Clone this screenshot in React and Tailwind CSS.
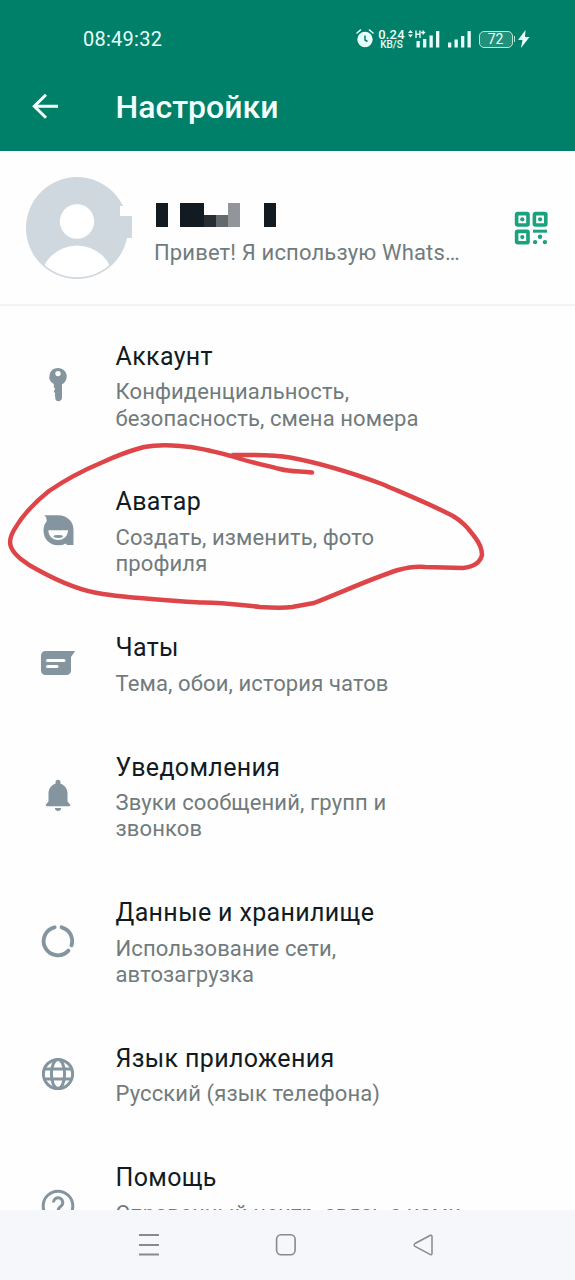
import React from "react";

const iconClass = "block h-9 w-9 overflow-visible text-[#84959f]";

function KeyIcon() {
  return (
    <svg viewBox="0 0 36 36" className={iconClass} fill="currentColor">
      <path fillRule="evenodd" d="M18 1a8.600 8.600 0 0 0-4.200 16.100V20l1.300 2-1.400 2.200 1.500 2.300-.4 2 .5 1.700v1.400c0 1.300 1.200 2.600 2.900 2.600 2 0 3.800-1.300 3.800-3.200V17.300A8.600 8.600 0 0 0 18 1Zm0 2.900a2.700 2.700 0 1 1 0 5.400 2.700 2.700 0 0 1 0-5.400Z" />
    </svg>
  );
}

function AvatarIcon() {
  return (
    <svg viewBox="0 0 36 36" className={iconClass} fill="currentColor">
      <path fillRule="evenodd" d="M4.300 2.200H18C27 2.200 33.500 8.400 33.500 17V32h-5.200c-1.200 0-2-.7-2.500-1.600A15 15 0 0 1 18 32.300C9.600 32.300 3.500 26 3.500 17.500c0-3.600 1-6.500 3.200-9.200C6.700 5.500 6.100 3.700 4.300 2.200ZM8.300 17.300c0 5.500 4.100 9.700 9.900 9.700s9.800-4.200 9.800-9.700Z" />
      <ellipse cx="18.200" cy="23.500" rx="4.700" ry="1.400" />
    </svg>
  );
}

function ChatIcon() {
  return (
    <svg viewBox="0 0 36 36" className={iconClass} fill="currentColor">
      <path d="M5.500 6H34.200c.6 0 .7.600.4 1.100L31 12v13.500c0 2.500-2 4.500-4.500 4.500h-21A4.500 4.500 0 0 1 1 25.500v-15C1 8 3 6 5.500 6Z" />
      <path d="M7.500 15.500H24M7.500 21.500H17" stroke="#fff" strokeWidth="3" strokeLinecap="round" />
    </svg>
  );
}

function BellIcon() {
  return (
    <svg viewBox="0 0 36 36" className={iconClass} fill="currentColor">
      <path d="M18 1.800c-1.500 0-2.500 1-2.500 2.500v1.500C11 7.100 8.500 11 8.500 15.500v8l-2.400 2.700c-.7 1-.2 2 1 2h21.800c1.200 0 1.700-1 1-2l-2.400-2.700v-8c0-4.500-2.500-8.400-7-9.700V4.300c0-1.500-1-2.500-2.500-2.500Z" />
      <path d="M14.800 30h6.400c-.2 1.800-1.500 3-3.200 3s-3-1.200-3.200-3Z" />
    </svg>
  );
}

function DataIcon() {
  return (
    <svg viewBox="0 0 36 36" className={iconClass} fill="none" stroke="currentColor" strokeWidth="3.900" strokeLinecap="round">
      <path d="M21.600 4.300A14.200 14.200 0 0 1 31.500 22.300" />
      <path d="M14.600 4.300A14.200 14.200 0 1 0 28.400 27.600" />
    </svg>
  );
}

function GlobeIcon() {
  return (
    <svg viewBox="0 0 36 36" className={iconClass} fill="none" stroke="currentColor" strokeWidth="3">
      <circle cx="18" cy="18" r="14.600" />
      <ellipse cx="18" cy="18" rx="6.600" ry="14.600" />
      <path d="M4.500 13h27M4.500 23h27" />
    </svg>
  );
}

function HelpIcon() {
  return (
    <svg viewBox="0 0 36 36" className={iconClass} fill="none" stroke="currentColor" strokeWidth="3">
      <circle cx="18" cy="18" r="14.800" />
      <path d="M13.400 14.500a4.700 4.700 0 1 1 7.900 3.400c-1.900 1.700-3.200 2.500-3.200 4.900M18 25v3" />
    </svg>
  );
}

const items = [
  { title: "Аккаунт", lines: ["Конфиденциальность,", "безопасность, смена номера"], Icon: KeyIcon },
  { title: "Аватар", lines: ["Создать, изменить, фото", "профиля"], Icon: AvatarIcon },
  { title: "Чаты", lines: ["Тема, обои, история чатов"], Icon: ChatIcon },
  { title: "Уведомления", lines: ["Звуки сообщений, групп и", "звонков"], Icon: BellIcon },
  { title: "Данные и хранилище", lines: ["Использование сети,", "автозагрузка"], Icon: DataIcon },
  { title: "Язык приложения", lines: ["Русский (язык телефона)"], Icon: GlobeIcon },
  { title: "Помощь", lines: ["Справочный центр, связь с нами"], Icon: HelpIcon, tall: true },
];

function SettingsRow({ title, lines, Icon, tall }) {
  return (
    <li className={tall ? "flex min-h-[145.7px] shrink-0 items-center" : "flex shrink-0 items-center"}>
      <div className="flex w-[115.5px] shrink-0 justify-center">
        <Icon />
      </div>
      <div className="self-start pt-[28.8px] pb-[25.8px] whitespace-nowrap">
        <h2 className="text-[25px] leading-[32px] tracking-[0.35px] text-[#111b21]">{title}</h2>
        <p className="mt-[6.5px] text-[22px] leading-[26.3px] tracking-[0.12px] text-[#717b7c]">
          {lines.map((line) => (
            <span key={line} className="block">{line}</span>
          ))}
        </p>
      </div>
    </li>
  );
}

function StatusBar() {
  return (
    <div className="flex h-[78px] items-center justify-between pr-[45px] pl-[83px] text-[#e9fffb]">
      <span className="text-[20px] leading-6 tracking-[0.25px]">08:49:32</span>
      <div className="flex items-center">
        <svg viewBox="0 0 18 20" className="h-5 w-[18px]" fill="none" stroke="currentColor">
          <circle cx="9" cy="10.500" r="7.700" fill="currentColor" stroke="none" />
          <path d="M1 4 4.500 1M17 4 13.500 1" strokeWidth="1.600" strokeLinecap="round" />
          <path d="M9 6.500V11l2.500 1.500" stroke="#008069" strokeWidth="1.500" />
        </svg>
        <div className="ml-[4px] flex w-[28px] flex-col items-center">
          <span className="text-[13px] leading-[11px] font-medium tracking-[0.2px]">0.24</span>
          <span className="text-[10px] leading-[9px] font-medium">KB/S</span>
        </div>
        <svg viewBox="0 0 32 20" className="ml-[2px] h-5 w-8" fill="currentColor">
          <path d="m0 4 2.500-3L5 4ZM0 5.500h5L2.500 8.500Z" />
          <path d="M8 1.500V9M12 1.500V9M8 5.200h4M13.200 3.500h4M15.200 1.500v4" stroke="currentColor" strokeWidth="1.400" />
          <path d="M8.500 12h3.300v6.500H8.500ZM15 10h3.300v8.500H15ZM21.500 6.500h3.300v12h-3.300ZM28 2h3.300v16.500H28Z" />
        </svg>
        <svg viewBox="0 0 23 20" className="ml-[8px] h-5 w-[23px]" fill="currentColor">
          <path d="M0 13.500h3.300v5H0ZM6.500 10.500h3.300v8H6.500ZM13 7h3.300v11.500H13ZM19.500 2h3.300v16.500h-3.300Z" />
        </svg>
        <div className="ml-2 flex h-[17px] w-[34px] items-center justify-center rounded-[5px] border-[1.500px] border-[#b5ead9] bg-[#23907a] text-[14px] leading-none">72</div>
        <div className="ml-px h-[6px] w-[1.500px] bg-[#b5ead9]" />
        <svg viewBox="0 0 12 20" className="ml-[3px] h-5 w-3" fill="currentColor">
          <path d="M7.500 1 0 11h4.500L3 19l8.500-11H7Z" />
        </svg>
      </div>
    </div>
  );
}

function ProfileAvatar() {
  return (
    <svg viewBox="0 0 108 104" className="h-[104px] w-[108px] shrink-0">
      <clipPath id="shoulders">
        <circle cx="52" cy="52" r="49.300" />
      </clipPath>
      <circle cx="52" cy="52" r="51" fill="#cfd8df" />
      <path d="M95 30h12v10H95Z" fill="#fefefe" />
      <path d="M95 40h12v22H95Z" fill="#cfd8df" />
      <circle cx="52" cy="45.500" r="17.200" fill="#fff" />
      <ellipse cx="52" cy="104" rx="36" ry="34.500" fill="#fff" clipPath="url(#shoulders)" />
    </svg>
  );
}

function RedactedName() {
  return (
    <svg viewBox="0 0 121 24" className="ml-[2px] h-6 w-[121px]" shapeRendering="crispEdges">
      <path d="M0 0h12v24H0ZM24 0h24v24H24ZM108 0h12v24h-12Z" fill="#111b21" />
      <path d="M48 12h12v12H48Z" fill="#262d33" />
      <path d="M60 12h12v12H60Z" fill="#64696c" />
      <path d="M72 0h12v24H72Z" fill="#92969a" />
    </svg>
  );
}

function QrIcon() {
  return (
    <svg viewBox="0 0 34 34" className="h-[34px] w-[34px]" fill="none" stroke="#1aa27f">
      <g strokeWidth="3.600">
        <rect x="2.600" y="2.600" width="11.400" height="11.400" rx="1" />
        <rect x="20.400" y="2.600" width="11.400" height="11.400" rx="1" />
        <rect x="2.600" y="20.400" width="11.400" height="11.400" rx="1" />
        <path d="M19 20.200h14" strokeWidth="3" />
      </g>
      <g fill="#1aa27f" stroke="none">
        <circle cx="8.300" cy="8.300" r="2.100" />
        <circle cx="26.100" cy="8.300" r="2.100" />
        <circle cx="8.300" cy="26.100" r="2.100" />
        <circle cx="26" cy="25.800" r="2.200" />
        <circle cx="21.100" cy="31.100" r="2.200" />
        <circle cx="30.900" cy="31.100" r="2.200" />
      </g>
    </svg>
  );
}

export default function App() {
  return (
    <div className="relative flex h-[1280px] w-[575px] flex-col overflow-hidden bg-[#fefefe] font-['Roboto',sans-serif]">
      <header className="h-[151px] shrink-0 bg-[#008069]">
        <StatusBar />
        <div className="flex h-[58px] items-center pl-8">
          <svg viewBox="0 0 27 26" className="h-[26px] w-[27px]" fill="none" stroke="#f4fffd" strokeWidth="3">
            <path d="M26 12.200H2.500M14 .8 2.300 12.200 14 23.800" />
          </svg>
          <h1 className="ml-[56.500px] text-[32px] leading-[40px] font-medium text-[#f4fffd]">Настройки</h1>
        </div>
      </header>

      <section className="flex h-[155px] shrink-0 items-center border-b-2 border-[#f1f3f4] pl-[25px]">
        <ProfileAvatar />
        <div className="ml-[21px] w-[320px] pt-[14px]">
          <RedactedName />
          <p className="mt-[12px] text-[22px] leading-[28px] tracking-[0.15px] whitespace-nowrap text-[#717b7c]">Привет! Я использую Whats…</p>
        </div>
        <div className="ml-[40px]">
          <QrIcon />
        </div>
      </section>

      <main className="min-h-0 flex-1 overflow-hidden pt-[6px]">
        <ul className="flex flex-col">
          {items.map((item) => (
            <SettingsRow key={item.title} {...item} />
          ))}
        </ul>
      </main>

      <nav className="flex h-[70px] shrink-0 items-center justify-between bg-[#f6f7fa] pr-[139px] pl-[136.5px]">
        <svg viewBox="0 0 24 24" className="h-6 w-6" fill="none" stroke="#888a8d" strokeWidth="1.800">
          <path d="M2 2h20M2 12h20M2 21.500h20" />
        </svg>
        <svg viewBox="0 0 24 24" className="h-6 w-6" fill="none" stroke="#888a8d" strokeWidth="1.600">
          <rect x="2.600" y="1.800" width="18.500" height="20" rx="4.500" />
        </svg>
        <svg viewBox="0 0 24 24" className="h-6 w-6" fill="none" stroke="#888a8d" strokeWidth="1.500" strokeLinejoin="round">
          <path d="M3 10.500 18 2.500c1.200-.6 2 0 2 1v17c0 1-.8 1.500-2 .9L3 13.300c-1.200-.8-1.200-2 0-2.800Z" />
        </svg>
      </nav>

      <svg viewBox="0 0 500 190" className="pointer-events-none absolute top-[430px] left-0 h-[190px] w-[500px]" fill="none" stroke="#de4548" strokeWidth="4.500" strokeLinecap="round" strokeLinejoin="round">
        <path d="M312 42.500C300 41 291 42 280 39C260 34 245 31 231 26C213 21 196 17 180 16C168 15 155 15 144 17C129 21 116 26 103 32C84 40 65 50 49 61C35 72 22 86 14 100C10 107 9 112 11 117C14 125 26 134 38 140C58 151 80 161 103 164C128 168 165 170 200 172.500C220 172 240 175 260 177C275 178 285 178 292 177L314 173C340 163 370 149 398 140C409 137 415 136 425 137L463 138C473 137 480 133 482 125C482 117 478 111 474 106C467 97 463 92 453 86C430 74 405 64 382 54C355 44 320 33 290 27.500C270 24 250 25 233 25" />
      </svg>
    </div>
  );
}
